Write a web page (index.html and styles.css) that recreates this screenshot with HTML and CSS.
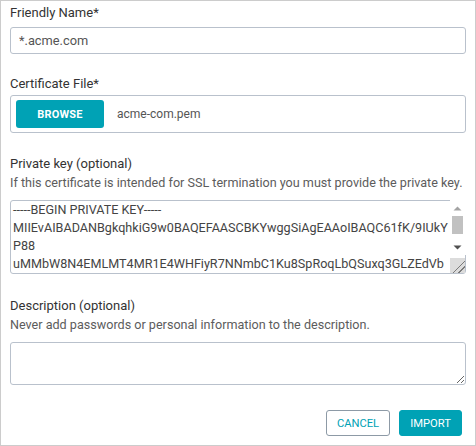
FILE: index.html
```html
<!DOCTYPE html>
<html lang="en">
<head>
<meta charset="utf-8">
<title>Import Certificate</title>
<link rel="stylesheet" href="styles.css">
</head>
<body>
<form class="panel">
  <div class="field field-name">
    <label class="label" for="fname">Friendly Name*</label>
    <input class="input" id="fname" type="text" value="*.acme.com">
  </div>

  <div class="field field-file">
    <div class="label">Certificate File*</div>
    <div class="filebox">
      <button type="button" class="btn-browse">BROWSE</button>
      <span class="filename">acme-com.pem</span>
    </div>
  </div>

  <div class="field field-key">
    <label class="label" for="pkey">Private key (optional)</label>
    <div class="help">If this certificate is intended for SSL termination you must provide the private key.</div>
    <div class="keywrap">
      <textarea class="textarea key" id="pkey">-----BEGIN PRIVATE KEY-----
MIIEvAIBADANBgkqhkiG9w0BAQEFAASCBKYwggSiAgEAAoIBAQC61fK/9IUkYP88
uMMbW8N4EMLMT4MR1E4WHFiyR7NNmbC1Ku8SpRoqLbQSuxq3GLZEdVb
Xk2nL8WqP0dHt3vR9sY1aBcDeFgHiJkLmNoPqRsTuVwXyZa1b2c3d4e5f6g7h8
-----END PRIVATE KEY-----</textarea>
      <div class="vscroll" aria-hidden="true">
        <span class="vs-btn">
          <svg width="15" height="15" viewBox="0 0 15 15"><polygon points="3.5,9.5 7.5,5.5 11.5,9.5" fill="#a3a3a3"/></svg>
        </span>
        <span class="vs-thumb"></span>
        <span class="vs-track"></span>
        <span class="vs-btn">
          <svg width="15" height="15" viewBox="0 0 15 15"><polygon points="3.5,5.5 11.5,5.5 7.5,9.5" fill="#505050"/></svg>
        </span>
      </div>
    </div>
  </div>

  <div class="field field-desc">
    <label class="label" for="desc">Description (optional)</label>
    <div class="help">Never add passwords or personal information to the description.</div>
    <textarea class="textarea desc" id="desc"></textarea>
  </div>

  <div class="actions">
    <button type="button" class="btn btn-cancel">CANCEL</button>
    <button type="button" class="btn btn-import">IMPORT</button>
  </div>
</form>
</body>
</html>
```

FILE: styles.css
```css
* { box-sizing: border-box; }

html, body {
  margin: 0;
  padding: 0;
  background: #ffffff;
}

body {
  font-family: Roboto, "Liberation Sans", Arial, sans-serif;
  color: #333333;
}

.panel {
  width: 476px;
  height: 446px;
  border: 1px solid #cccccc;
  padding: 3px 9px 9px 9px;
  display: flex;
  flex-direction: column;
}

.field {
  display: flex;
  flex-direction: column;
}

.label {
  display: block;
  font-size: 13px;
  line-height: 18px;
  color: #333333;
}

.field-name .label { margin-bottom: 5px; }
.field-file { margin-top: 21px; }
.field-file .label { margin-bottom: 2px; }
.field-key { margin-top: 22px; }
.field-desc { margin-top: 23px; }

.help {
  font-size: 12.6px;
  line-height: 18px;
  color: #5c5c5c;
  margin-top: 1px;
  margin-bottom: 8px;
  white-space: nowrap;
}

.input {
  height: 27px;
  width: 100%;
  border: 1px solid #b9c1cc;
  border-radius: 3px;
  padding: 0 8px;
  font-family: inherit;
  font-size: 12.8px;
  color: #555555;
  outline: none;
}

.filebox {
  height: 38px;
  border: 1px solid #b9c1cc;
  border-radius: 3px;
  padding: 3px 5px;
  display: flex;
  align-items: center;
  gap: 13px;
}

.btn-browse {
  width: 88px;
  height: 28px;
  border: none;
  border-radius: 3px;
  background: #00a2b5;
  color: #ffffff;
  font-family: inherit;
  font-size: 11px;
  font-weight: 700;
  letter-spacing: 0.2px;
}

.filename {
  font-size: 12px;
  color: #555555;
}

.textarea {
  display: block;
  width: 100%;
  border: 1px solid #b9c1cc;
  border-radius: 3px;
  font-family: inherit;
  color: #444444;
  outline: none;
}

.keywrap {
  position: relative;
}

.textarea.key {
  height: 74px;
  padding: 0 15px 0 2px;
  font-size: 12.6px;
  line-height: 18px;
  overflow: hidden;
  resize: vertical;
}

.textarea.key::-webkit-resizer {
  background:
    linear-gradient(135deg, transparent 0 58%, #7a7a7a 58% 63%, transparent 63% 76%, #7a7a7a 76% 81%, transparent 81%),
    #dcdcdc;
}

.vscroll {
  position: absolute;
  top: 0;
  right: 0;
  width: 16px;
  height: 55px;
  padding: 1px 1px 0 0;
  background: #ffffff;
  display: flex;
  flex-direction: column;
}

.vs-btn {
  display: block;
  width: 15px;
  height: 15px;
  flex: none;
}

.vs-btn svg {
  display: block;
}

.vs-thumb {
  display: block;
  height: 18px;
  margin: 0 2px;
  background: #c1c1c1;
  flex: none;
}

.vs-track {
  flex: 1;
}

.textarea.desc {
  height: 43px;
  padding: 2px 4px;
  font-size: 13px;
  resize: vertical;
}

.actions {
  margin-top: 25px;
  display: flex;
  justify-content: flex-end;
  gap: 9px;
  padding-right: 4px;
}

.btn {
  height: 26px;
  border-radius: 3px;
  font-family: inherit;
  font-size: 11.2px;
  padding: 0 8px;
}

.btn-cancel {
  width: 64px;
  background: #ffffff;
  border: 1px solid #8d9aa6;
  color: #00a2b5;
}

.btn-import {
  width: 63px;
  background: #00a2b5;
  border: 1px solid #00a2b5;
  color: #ffffff;
}
```
